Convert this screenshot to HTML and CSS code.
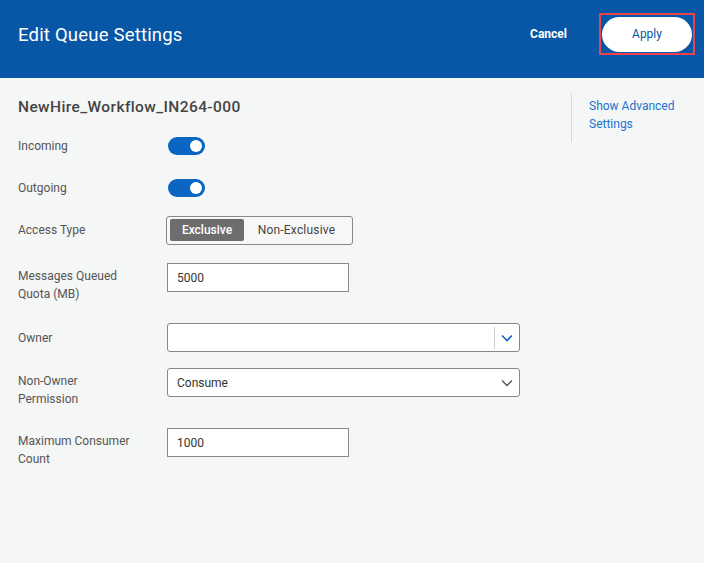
FILE: index.html
```html
<!DOCTYPE html>
<html>
<head>
<meta charset="utf-8">
<link rel="stylesheet" href="styles.css">
</head>
<body>
<header class="topbar">
  <h1 class="title">Edit Queue Settings</h1>
  <div class="actions">
    <button class="cancel">Cancel</button>
    <div class="apply-wrap"><button class="apply">Apply</button></div>
  </div>
</header>
<main class="content">
  <section class="form">
    <h2 class="queue-name">NewHire_Workflow_IN264-000</h2>
    <div class="row r-toggle1">
      <div class="label">Incoming</div>
      <div class="toggle"><span class="knob"></span></div>
    </div>
    <div class="row r-toggle2">
      <div class="label">Outgoing</div>
      <div class="toggle"><span class="knob"></span></div>
    </div>
    <div class="row r-access">
      <div class="label">Access Type</div>
      <div class="segmented">
        <span class="seg active">Exclusive</span>
        <span class="seg rest">Non-Exclusive</span>
      </div>
    </div>
    <div class="row top r-quota">
      <div class="label two">Messages Queued<br>Quota (MB)</div>
      <div class="input short">5000</div>
    </div>
    <div class="row r-owner">
      <div class="label">Owner</div>
      <div class="select">
        <span class="value"></span>
        <span class="divider"></span>
        <svg class="chev blue" width="12" height="8" viewBox="0 0 12 8"><path d="M1 1.5 L6 6.5 L11 1.5" fill="none" stroke="#1565c0" stroke-width="1.6"/></svg>
      </div>
    </div>
    <div class="row top r-perm">
      <div class="label two">Non-Owner<br>Permission</div>
      <div class="select">
        <span class="value">Consume</span>
        <svg class="chev" width="12" height="8" viewBox="0 0 12 8"><path d="M1 1.5 L6 6.5 L11 1.5" fill="none" stroke="#555" stroke-width="1.4"/></svg>
      </div>
    </div>
    <div class="row top r-max">
      <div class="label two">Maximum Consumer<br>Count</div>
      <div class="input short">1000</div>
    </div>
  </section>
  <aside class="side">
    <a class="adv">Show Advanced<br>Settings</a>
  </aside>
</main>
</body>
</html>
```

FILE: styles.css
```css
* { box-sizing: border-box; }
html, body { margin: 0; padding: 0; }
body {
  width: 704px;
  height: 563px;
  background: #f5f6f6;
  font-family: Roboto, "Liberation Sans", sans-serif;
  color: #444;
  overflow: hidden;
}
.topbar {
  height: 78px;
  background: #0857a6;
  display: flex;
  align-items: center;
  justify-content: space-between;
  padding: 0 9px 0 18px;
}
.title {
  margin: 0;
  font-size: 18.5px;
  font-weight: 400;
  color: #fff;
  letter-spacing: 0.2px;
  padding-bottom: 9px;
}
.actions {
  display: flex;
  align-items: center;
  gap: 32px;
  padding-bottom: 10px;
}
.cancel {
  background: none;
  border: none;
  color: #fff;
  font-family: inherit;
  font-size: 12px;
  font-weight: 700;
  padding: 0;
}
.apply-wrap {
  border: 2px solid #e8434f;
  width: 96px;
  height: 42px;
  display: flex;
  align-items: center;
  justify-content: center;
}
.apply {
  width: 90px;
  height: 35px;
  border-radius: 18px;
  border: none;
  background: #fff;
  color: #0857a6;
  font-family: inherit;
  font-size: 12px;
}
.content {
  display: flex;
  justify-content: space-between;
}
.form {
  padding-left: 18px;
  display: flex;
  flex-direction: column;
}
.queue-name {
  margin: 19px 0 0;
  height: 20px;
  line-height: 20px;
  font-size: 15.5px;
  font-weight: 500;
  color: #444;
  letter-spacing: 0.4px;
}
.row {
  display: flex;
  align-items: center;
}
.row.top { align-items: flex-start; }
.label {
  width: 149px;
  font-size: 12px;
  line-height: 18px;
  color: #555;
}
.label.two { padding-top: 4px; }
.r-toggle1 { margin-top: 11px; height: 36px; }
.r-toggle2 { margin-top: 6px; height: 36px; }
.r-access { margin-top: 6px; height: 36px; }
.r-quota { margin-top: 15px; }
.r-owner { margin-top: 20px; }
.r-perm { margin-top: 16px; }
.r-max { margin-top: 20px; }
.toggle {
  width: 37px;
  height: 18px;
  border-radius: 9px;
  background: #0a66c2;
  position: relative;
  margin-left: 1px;
}
.knob {
  position: absolute;
  right: 3px;
  top: 3px;
  width: 12px;
  height: 12px;
  border-radius: 50%;
  background: #fff;
}
.segmented {
  margin-left: -1px;
  height: 29px;
  width: 187px;
  border: 1px solid #888;
  border-radius: 3px;
  background: #f7f7f7;
  display: flex;
  align-items: center;
  padding: 3px;
}
.seg {
  height: 22px;
  display: flex;
  align-items: center;
  justify-content: center;
  font-size: 12px;
  color: #444;
  border-radius: 2px;
}
.seg.active {
  background: #6d6d6d;
  color: #fff;
  font-weight: 500;
  width: 74px;
}
.seg.rest { flex: 1; letter-spacing: 0.2px; }
.input {
  height: 29px;
  background: #fff;
  border: 1px solid #888;
  font-size: 12px;
  color: #333;
  display: flex;
  align-items: center;
  padding-left: 9px;
}
.input.short { width: 182px; }
.select {
  width: 353px;
  height: 29px;
  background: #fff;
  border: 1px solid #888;
  border-radius: 3px;
  display: flex;
  align-items: center;
  padding: 0 6px 0 9px;
  font-size: 12px;
  color: #333;
}
.select .value { flex: 1; }
.divider {
  width: 1px;
  height: 22px;
  background: #ccc;
  margin-right: 6px;
}
.side {
  margin-top: 15px;
  width: 133px;
  height: 49px;
  border-left: 1px solid #d8d8d8;
  padding-left: 17px;
  padding-top: 4px;
  line-height: 18px;
  font-size: 12px;
}
.adv {
  font-size: 12px;
  line-height: 18px;
  color: #1a73d0;
}
```
